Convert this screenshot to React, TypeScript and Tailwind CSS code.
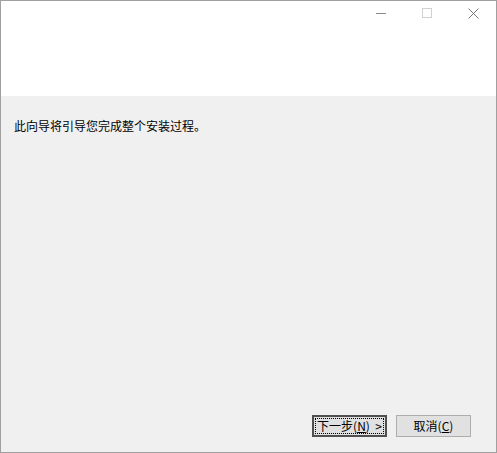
import React from "react";

export default function App() {
  return (
    <div className="w-[497px] h-[453px] border border-[#a0a0a0] flex flex-col bg-[#f0f0f0] font-['Noto_Sans_CJK_SC','Noto_Sans',sans-serif] text-black">
      <div className="h-[95px] bg-white flex justify-end items-start">
        <div className="flex h-[24px]">
          <div className="w-[46px] h-[24px] flex items-center justify-center">
            <svg width="10" height="10" viewBox="0 0 10 10">
              <line x1="0" y1="5.5" x2="10" y2="5.5" stroke="#8a8a8a" strokeWidth="1" />
            </svg>
          </div>
          <div className="w-[46px] h-[24px] flex items-center justify-center">
            <svg width="10" height="10" viewBox="0 0 10 10">
              <rect x="0.5" y="0.5" width="9" height="9" fill="none" stroke="#d0d0d0" strokeWidth="1" />
            </svg>
          </div>
          <div className="w-[46px] h-[24px] flex items-center justify-center">
            <svg width="11" height="11" viewBox="0 0 11 11">
              <path d="M0.5 0.5 L10.5 10.5 M10.5 0.5 L0.5 10.5" stroke="#777" strokeWidth="1" fill="none" />
            </svg>
          </div>
        </div>
      </div>
      <div className="flex-1 flex flex-col pt-[21px] pl-[13px] pr-[25px] pb-[15px]">
        <p className="text-[12px] leading-[18px]">此向导将引导您完成整个安装过程。</p>
        <div className="flex-1" />
        <div className="flex justify-end gap-[9px]">
          <button className="w-[75px] h-[22px] border-2 border-[#505050] bg-[#e1e1e1] p-[1px] flex">
            <span className="flex-1 border border-dotted border-black flex items-center justify-center text-[12px] leading-none">
              下一步(<span className="underline">N</span>)&nbsp;&nbsp;&gt;
            </span>
          </button>
          <button className="w-[75px] h-[22px] border border-[#adadad] bg-[#e1e1e1] flex items-center justify-center text-[12px] leading-none">
            取消(<span className="underline">C</span>)
          </button>
        </div>
      </div>
    </div>
  );
}
